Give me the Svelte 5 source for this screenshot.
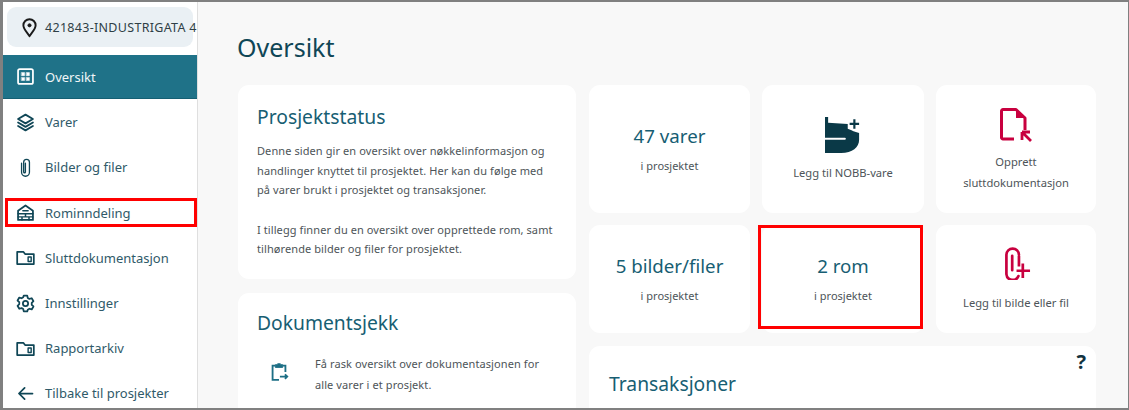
<script>
  const navItems = [
    { label: "Oversikt", icon: "grid", active: true },
    { label: "Varer", icon: "layers" },
    { label: "Bilder og filer", icon: "clip" },
    { label: "Rominndeling", icon: "house", marked: true },
    { label: "Sluttdokumentasjon", icon: "folder" },
    { label: "Innstillinger", icon: "gear" },
    { label: "Rapportarkiv", icon: "folder" },
    { label: "Tilbake til prosjekter", icon: "back" }
  ];
</script>

{#snippet navIcon(name)}
  <svg class="nav-icon" viewBox="0 0 24 24" fill="none" stroke="currentColor" stroke-width="2" stroke-linejoin="round" stroke-linecap="round">
    {#if name === "grid"}
      <rect x="3.5" y="3.5" width="17" height="17" rx="2" />
      <path d="M7.5 7.500h3.500v3.500h-3.500zM13 7.500h3.500v3.500H13zM7.500 13h3.500v3.500H7.500zM13 13h3.500v3.500H13z" fill="currentColor" stroke-width="0.5" />
    {:else if name === "layers"}
      <path d="M12 3 3.500 8 12 13l8.500-5z" />
      <path d="M3.500 12 12 17l8.500-5M3.500 16 12 21l8.500-5" />
    {:else if name === "clip"}
      <path d="M7.500 7v10.500a4.500 4.500 0 0 0 9 0V6a3.300 3.300 0 0 0-6.600 0v11a1 1 0 0 0 2 0V7" stroke-width="1.500" />
    {:else if name === "house"}
      <path d="M3.500 20.500V10L12 4l8.500 6v10.500z" />
      <path d="M3.500 13.500h17M3.500 17h17M12 13.500V17M8 17v3.500M16 17v3.500M9 10h6" stroke-width="1.700" />
    {:else if name === "folder"}
      <path d="M2.500 19.500V5.500h7l2 2.500h10v11.500z" />
      <path d="M15 11.500h3.500v5H15z" stroke-width="1.600" />
    {:else if name === "gear"}
      <circle cx="12" cy="12" r="3" />
      <path d="M10 3h4l.6 2.700 1.900 1.100 2.600-.8 2 3.400-2 1.900v2.200l2 1.900-2 3.400-2.600-.8-1.900 1.100L14 21h-4l-.6-2.700-1.900-1.100-2.600.8-2-3.400 2-1.900v-2.200l-2-1.900 2-3.400 2.600.8 1.900-1.100z" />
    {:else if name === "back"}
      <path d="M20 12H5M11 5.500 4.500 12l6.500 6.500" />
    {/if}
  </svg>
{/snippet}

<div class="frame">
  <aside class="sidebar">
    <div class="project">
      <svg class="pin" viewBox="0 0 24 24" fill="none" stroke="#1a1a1a" stroke-width="2.200">
        <path d="M12 22c-1-2.500-7-7.500-7-12.500a7 7 0 0 1 14 0C19 14.500 13 19.500 12 22z" stroke-linejoin="round" />
        <circle cx="12" cy="9.500" r="1.800" fill="#1a1a1a" stroke-width="1" />
      </svg>
      <span class="project-name">421843-INDUSTRIGATA 4</span>
    </div>
    <nav>
      {#each navItems as item}
        <div class="nav-item" class:active={item.active} class:marked={item.marked}>
          {@render navIcon(item.icon)}
          <span>{item.label}</span>
        </div>
      {/each}
    </nav>
  </aside>

  <main class="content">
    <h1>Oversikt</h1>
    <div class="columns">
      <div class="left">
        <section class="card status">
          <h2>Prosjektstatus</h2>
          <p>Denne siden gir en oversikt over nøkkelinformasjon og handlinger knyttet til prosjektet. Her kan du følge med på varer brukt i prosjektet og transaksjoner.</p>
          <p class="second">I tillegg finner du en oversikt over opprettede rom, samt tilhørende bilder og filer for prosjektet.</p>
        </section>
        <section class="card docs">
          <h2>Dokumentsjekk</h2>
          <div class="docs-row">
            <svg class="docs-icon" viewBox="0 0 24 24" fill="none" stroke="#1d6f85" stroke-width="2">
              <path d="M8 5H5v15.500h7M16 5h3v7" />
              <path d="M8 7V4h2.500V3h3v1H16v3z" fill="#1d6f85" stroke-width="1" />
              <path d="M13 17h8M18.500 14.500 21 17l-2.500 2.500" />
            </svg>
            <p>Få rask oversikt over dokumentasjonen for alle varer i et prosjekt.</p>
          </div>
        </section>
      </div>

      <div class="right">
        <div class="tiles">
          <div class="card tile tall">
            <div class="big">47 varer</div>
            <div class="small">i prosjektet</div>
          </div>
          <div class="card tile tall">
            <svg class="tile-icon nobb" viewBox="0 0 38 38">
              <path d="M0 0h3.300v6L24 7.300v5l4 1.700 2 1 6 2V24c0 8-7 14-19 14H0V24h21a1 1 0 0 0 0-2H0z" fill="#0a3947" />
              <path d="M31 2.300v10M26 7.300h10" stroke="#0a3947" stroke-width="2.300" fill="none" />
            </svg>
            <div class="action">Legg til NOBB-vare</div>
          </div>
          <div class="card tile tall">
            <svg class="tile-icon doc" viewBox="0 0 32 34">
              <path d="M14 31H3a1.500 1.500 0 0 1-1.500-1.500V3A1.500 1.500 0 0 1 3 1.500h13L25 10v12" fill="none" stroke="#c8003f" stroke-width="3" stroke-linejoin="round" />
              <path d="M16 1.500 25 10h-9z" fill="#c8003f" />
              <path d="M22 24h8M22 24v8M22.500 24.500 31 33" stroke="#c8003f" stroke-width="2.800" fill="none" />
            </svg>
            <div class="action two">Opprett<br />sluttdokumentasjon</div>
          </div>
          <div class="card tile short">
            <div class="big">5 bilder/filer</div>
            <div class="small">i prosjektet</div>
          </div>
          <div class="card tile short marked">
            <div class="big">2 rom</div>
            <div class="small">i prosjektet</div>
          </div>
          <div class="card tile short">
            <svg class="tile-icon attach" viewBox="0 0 28 34">
              <path d="M15 30a6.500 6.500 0 0 1-12.500-2V8a6.500 6.500 0 0 1 13 0M8.500 9v15" fill="none" stroke="#c8003f" stroke-width="2.800" stroke-linecap="round" />
              <path d="M15.500 9v11M19.500 17v15M13 24.500h14" fill="none" stroke="#c8003f" stroke-width="2.800" />
            </svg>
            <div class="action">Legg til bilde eller fil</div>
          </div>
        </div>
        <section class="card transactions">
          <span class="help">?</span>
          <h2>Transaksjoner</h2>
        </section>
      </div>
    </div>
  </main>
</div>

<style>
  :global(body) {
    margin: 0;
    background: #f8f8f8;
  }

  .frame {
    box-sizing: border-box;
    width: 1129px;
    height: 410px;
    display: flex;
    overflow: hidden;
    border: solid #808080;
    border-width: 2px 1px 2px 3px;
    font-family: "Noto Sans", sans-serif;
    color: #4d5458;
  }

  .sidebar {
    flex: none;
    width: 195px;
    height: 450px;
    background: #fff;
    border-right: 1px solid #dfdfdf;
    padding-top: 5px;
    box-sizing: border-box;
    overflow: hidden;
  }

  .project {
    margin: 0 0 0 4px;
    width: 186px;
    height: 40px;
    background: #eaf0f4;
    border-radius: 9px;
    display: flex;
    align-items: center;
    padding-left: 11px;
    box-sizing: border-box;
    white-space: nowrap;
  }

  .pin {
    width: 21px;
    height: 21px;
    flex: none;
    margin-right: 5px;
    margin-left: 1px;
  }

  .project-name {
    font-size: 12.500px;
    letter-spacing: 0.3px;
    color: #2f3f46;
  }

  nav {
    margin-top: 8px;
  }

  .nav-item {
    position: relative;
    height: 45.200px;
    display: flex;
    align-items: center;
    padding-left: 12px;
    color: #0f4656;
    font-size: 13px;
  }

  .nav-item span {
    color: #2f5a69;
  }

  .nav-item.active {
    height: 44px;
    margin-bottom: 0.700px;
    background: #1f7288;
    color: #fff;
    border-bottom: 1px solid #155f73;
    box-sizing: border-box;
  }

  .nav-item.active span {
    color: #f0f6f8;
  }

  .nav-item.marked::after {
    content: "";
    position: absolute;
    left: 2px;
    right: 0;
    top: 8px;
    height: 29px;
    border: 3px solid #ff0000;
    box-sizing: border-box;
  }

  .nav-icon {
    width: 21px;
    height: 21px;
    flex: none;
    margin-right: 9px;
  }

  .content {
    flex: 1;
    min-width: 0;
    padding: 27px 32px 0 40px;
  }

  h1 {
    margin: 0 0 20px -1px;
    font-size: 25px;
    line-height: 36px;
    font-weight: 400;
    color: #0f4656;
  }

  h2 {
    margin: 0;
    font-size: 19.300px;
    font-weight: 400;
    line-height: 28px;
    color: #175e73;
  }

  .columns {
    display: flex;
    gap: 13px;
  }

  .left {
    width: 338px;
    display: flex;
    flex-direction: column;
    gap: 14px;
  }

  .right {
    width: 507px;
    display: flex;
    flex-direction: column;
    gap: 13px;
  }

  .card {
    background: #fff;
    border-radius: 11px;
    box-sizing: border-box;
  }

  .status {
    height: 194px;
    padding: 18px 20px 0 19px;
  }

  .status p,
  .docs p {
    margin: 0;
    font-size: 11px;
    line-height: 19.500px;
    letter-spacing: 0.09px;
  }

  .status h2 {
    margin-bottom: 10px;
  }

  .status .second {
    margin-top: 20px;
  }

  .docs {
    height: 130px;
    padding: 16px 20px 0 19px;
  }

  .docs-row {
    display: flex;
    align-items: flex-start;
    margin-top: 16px;
  }

  .docs p {
    line-height: 21px;
  }

  .docs-icon {
    flex: none;
    width: 22px;
    height: 22px;
    margin: 8px 25.500px 0 10.500px;
  }

  .tiles {
    display: grid;
    grid-template-columns: 161px 162px 160px;
    grid-template-rows: 128px 108px;
    column-gap: 12px;
    row-gap: 12px;
  }

  .tile {
    position: relative;
    display: flex;
    flex-direction: column;
    align-items: center;
    justify-content: center;
    text-align: center;
  }

  .tile.marked::after {
    content: "";
    position: absolute;
    left: -4px;
    right: 1px;
    top: 0;
    bottom: 4px;
    border: 3px solid #ff0000;
  }

  .big {
    font-size: 18.700px;
    line-height: 26px;
    color: #175e73;
    margin-top: -2px;
  }

  .small {
    font-size: 11px;
    line-height: 16px;
    margin-top: 9px;
  }

  .action {
    font-size: 11.200px;
    line-height: 20px;
  }

  .action.two {
    line-height: 21px;
  }

  .tile-icon {
    display: block;
    flex: none;
  }

  .nobb {
    width: 36px;
    height: 38px;
    margin: 0 0 9px;
  }

  .doc {
    width: 32px;
    height: 34px;
    margin: 3px 0 9px;
  }

  .attach {
    width: 27px;
    height: 33px;
    margin: 2px 0 13px 3px;
  }

  .transactions {
    position: relative;
    height: 100px;
    padding: 24px 20px 0;
  }

  .help {
    position: absolute;
    top: 2px;
    right: 10px;
    font-size: 20px;
    font-weight: 700;
    color: #12333f;
  }
</style>
